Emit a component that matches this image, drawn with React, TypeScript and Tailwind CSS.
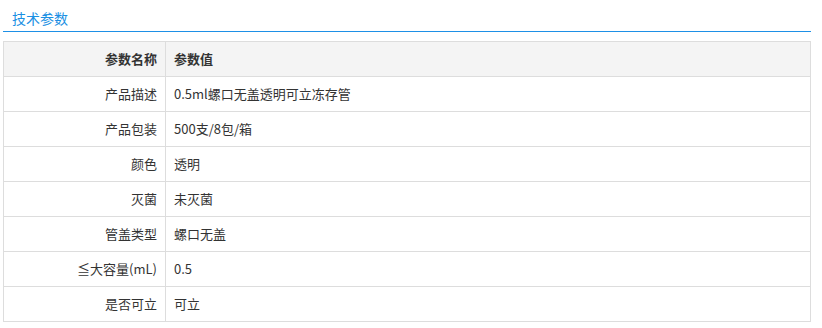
import React from "react";

const rows: [string, string][] = [
  ["产品描述", "0.5ml螺口无盖透明可立冻存管"],
  ["产品包装", "500支/8包/箱"],
  ["颜色", "透明"],
  ["灭菌", "未灭菌"],
  ["管盖类型", "螺口无盖"],
  ["≦大容量(mL)", "0.5"],
  ["是否可立", "可立"],
];

export default function App() {
  return (
    <div
      className="w-[822px] h-[328px] bg-white"
      style={{ fontFamily: '"Noto Sans CJK SC", "Noto Sans", sans-serif' }}
    >
      <div className="ml-[3px] w-[808px]">
        <div className="h-[31px] pl-[9px] pt-[8px] text-[14px] leading-[20px] text-[#1a8fe3]">
          技术参数
        </div>
        <div className="h-px bg-[#1e90e6]" />
        <table className="mt-[9px] w-full border-collapse text-[13px] text-[#333]">
          <tbody>
            <tr className="h-[35px] bg-[#f4f4f4]">
              <th className="w-[162px] border border-[#dddddd] pr-[8px] text-right font-bold">
                参数名称
              </th>
              <th className="border border-[#dddddd] pl-[8px] text-left font-bold">
                参数值
              </th>
            </tr>
            {rows.map(([k, v]) => (
              <tr key={k} className="h-[35px] bg-white">
                <td className="border border-[#dddddd] pr-[8px] text-right">{k}</td>
                <td className="border border-[#dddddd] pl-[8px] text-left">{v}</td>
              </tr>
            ))}
          </tbody>
        </table>
      </div>
    </div>
  );
}
